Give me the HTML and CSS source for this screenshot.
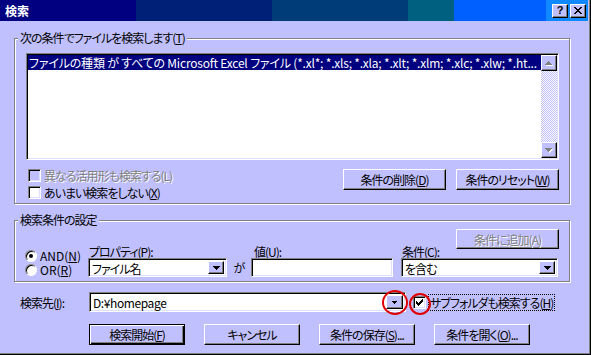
FILE: index.html
```html
<!DOCTYPE html>
<html lang="ja">
<head>
  <meta charset="UTF-8">
  <title>検索</title>
  <link rel="stylesheet" href="styles.css">
</head>
<body>
  <div class="window">
    <div class="titlebar">
      <span class="title">検索</span>
      <div class="caption-buttons">
        <span class="cap-btn">?</span>
        <span class="cap-btn">
          <svg width="8" height="7" viewBox="0 0 8 7" shape-rendering="crispEdges"><path d="M0 0h2v1h1v1h2V1h1V0h2v1H7v1H6v1H5v1h1v1h1v1h1v1H6V6H5V5H3v1H2v1H0V6h1V5h1V4h1V3H2V2H1V1H0z"/></svg>
        </span>
      </div>
    </div>

    <div class="content">
      <fieldset class="group group-criteria">
        <legend>次の条件でファイルを検索します(<u>T</u>)</legend>
        <div class="listbox">
          <div class="list-items">
            <div class="list-item selected">ファイルの種類 が すべての Microsoft Excel ファイル (*.xl*; *.xls; *.xla; *.xlt; *.xlm; *.xlc; *.xlw; *.ht...</div>
          </div>
          <div class="vscroll">
            <span class="sb-btn">
              <svg width="8" height="5" viewBox="0 0 8 5" shape-rendering="crispEdges"><path class="arrow-shadow" d="M4 1h1v1h1v1h1v1h1v1H1V4h1V3h1V2h1z"/><path class="arrow-gray" d="M3 0h1v1h1v1h1v1h1v1H0V3h1V2h1V1h1z"/></svg>
            </span>
            <span class="sb-track"></span>
            <span class="sb-btn">
              <svg width="8" height="5" viewBox="0 0 8 5" shape-rendering="crispEdges"><path class="arrow-shadow" d="M1 1h7v1H7v1H6v1H5v1H4V4H3V3H2V2H1z"/><path class="arrow-gray" d="M0 0h7v1H6v1H5v1H4v1H3V3H2V2H1V1H0z"/></svg>
            </span>
          </div>
        </div>
        <div class="criteria-actions">
          <div class="checks">
            <label class="check disabled"><span class="box"></span><span>異なる活用形も検索する(L)</span></label>
            <label class="check"><span class="box"></span><span>あいまい検索をしない(<u>X</u>)</span></label>
          </div>
          <div class="action-buttons">
            <button class="btn">条件の削除(<u>D</u>)</button>
            <button class="btn">条件のリセット(<u>W</u>)</button>
          </div>
        </div>
      </fieldset>

      <fieldset class="group group-define">
        <legend>検索条件の設定</legend>
        <div class="add-row">
          <button class="btn" disabled>条件に追加(A)</button>
        </div>
        <div class="fields">
          <div class="radios">
            <label class="radio"><span class="dot checked"></span><span>AND(<u>N</u>)</span></label>
            <label class="radio"><span class="dot"></span><span>OR(<u>R</u>)</span></label>
          </div>
          <div class="field field-prop">
            <label>プロパティ(<u>P</u>):</label>
            <div class="combo">
              <span class="value">ファイル名</span>
              <span class="drop"><svg width="7" height="4" viewBox="0 0 7 4" shape-rendering="crispEdges"><path d="M0 0h7v1H6v1H5v1H4v1H3V3H2V2H1V1H0z"/></svg></span>
            </div>
          </div>
          <div class="ga">が</div>
          <div class="field field-value">
            <label>値(<u>U</u>):</label>
            <div class="combo"><span class="value"></span></div>
          </div>
          <div class="field field-cond">
            <label>条件(<u>C</u>):</label>
            <div class="combo">
              <span class="value">を含む</span>
              <span class="drop"><svg width="7" height="4" viewBox="0 0 7 4" shape-rendering="crispEdges"><path d="M0 0h7v1H6v1H5v1H4v1H3V3H2V2H1V1H0z"/></svg></span>
            </div>
          </div>
        </div>
      </fieldset>

      <div class="search-row">
        <label class="search-label">検索先(<u>I</u>):</label>
        <div class="combo path">
          <span class="value">D:¥homepage</span>
          <span class="drop"><svg width="5" height="3" viewBox="0 0 5 3" shape-rendering="crispEdges"><path d="M0 0h5v1H4v1H3v1H2V2H1V1H0z"/></svg></span>
        </div>
        <label class="subfolder">
          <span class="box">
            <svg width="7" height="7" viewBox="0 0 7 7" shape-rendering="crispEdges"><path d="M6 0h1v3H6v1H5v1H4v1H3v1H2V6H1V5H0V2h1v1h1v1h1V3h1V2h1V1h1z"/></svg>
          </span>
          <span class="focus-text">サブフォルダも検索する(<u>H</u>)</span>
        </label>
      </div>

      <div class="main-buttons">
        <button class="btn default">検索開始(<u>F</u>)</button>
        <button class="btn">キャンセル</button>
        <button class="btn">条件の保存(<u>S</u>)...</button>
        <button class="btn">条件を開く(<u>O</u>)...</button>
      </div>
    </div>

    <span class="mark mark-drop"></span>
    <span class="mark mark-check"></span>
  </div>
</body>
</html>
```

FILE: styles.css
```css
* {
  box-sizing: border-box;
}

body {
  margin: 0;
  font-family: "Noto Sans CJK JP", sans-serif;
  font-size: 12px;
  font-feature-settings: "palt";
  letter-spacing: -1px;
  color: #000;
  background-color: #c0c0ff;
}

u {
  text-decoration: underline;
  text-underline-offset: 1px;
}

.window {
  position: relative;
  width: 591px;
  height: 355px;
  background-color: #c0c0ff;
  border-right: 1px solid #000;
  border-bottom: 1px solid #000;
  box-shadow: inset -1px -1px #808080;
  overflow: hidden;
}

/* title bar */
.titlebar {
  display: flex;
  align-items: center;
  justify-content: space-between;
  width: 588px;
  height: 21px;
  padding: 0 2px 0 5px;
  background: linear-gradient(to right,
    #000080 0 136px, #002078 136px 272px, #003c78 272px 408px,
    #006080 408px 454px, #0060ff 454px 546px, #1088ff 546px);
}

.title {
  color: #fff;
  font-weight: bold;
  line-height: 14px;
  letter-spacing: 0;
}

.caption-buttons {
  display: flex;
  gap: 2px;
}

.cap-btn {
  display: flex;
  align-items: center;
  justify-content: center;
  width: 16px;
  height: 14px;
  background-color: #c0c0ff;
  border: 1px solid;
  border-color: #fff #000 #000 #fff;
  box-shadow: inset -1px -1px #808080;
  font-family: "Liberation Sans", sans-serif;
  font-weight: bold;
  font-size: 11px;
  line-height: 1;
  letter-spacing: 0;
}

.content {
  padding-top: 10px;
}

/* group boxes */
.group {
  width: 556px;
  min-width: 0;
  margin: 0 0 0 14px;
  border: 1px solid #808080;
  box-shadow: inset 1px 1px #fff, 1px 1px #fff;
}

.group legend {
  padding: 0 2px;
  line-height: 14px;
  background-color: #c0c0ff;
}

.group-criteria {
  padding: 8px 10px 4px 11px;
}

.group-criteria legend {
  margin-left: -8px;
}

.group-define {
  margin-top: 9px;
  padding: 2px 10px 4px 10px;
}

.group-define legend {
  margin-left: -7px;
}

/* list box */
.listbox {
  display: flex;
  height: 107px;
  padding: 1px;
  background-color: #fff;
  border: 1px solid;
  border-color: #808080 #fff #fff #808080;
  box-shadow: inset 1px 1px #000, inset -1px -1px #dfdfff;
}

.list-items {
  flex: 1;
  min-width: 0;
}

.list-item {
  height: 15px;
  padding-left: 1px;
  line-height: 15px;
  white-space: nowrap;
  overflow: hidden;
  letter-spacing: -0.2px;
}

.list-item.selected {
  background-color: #000080;
  color: #fff;
}

.vscroll {
  display: flex;
  flex-direction: column;
  width: 16px;
}

.sb-btn {
  display: flex;
  align-items: center;
  justify-content: center;
  height: 16px;
  background-color: #c0c0ff;
  border: 1px solid;
  border-color: #fff #000 #000 #fff;
  box-shadow: inset -1px -1px #808080;
}

.arrow-gray {
  fill: #808080;
}

.arrow-shadow {
  fill: #fff;
}

.sb-track {
  flex: 1;
  background: repeating-conic-gradient(#fff 0 25%, #c0c0ff 0 50%) 0 0 / 2px 2px;
}

/* check boxes and buttons */
.criteria-actions {
  display: flex;
  justify-content: space-between;
  margin-top: 9px;
}

.checks {
  display: flex;
  flex-direction: column;
  gap: 4px;
  padding-left: 2px;
}

.check {
  display: flex;
  align-items: center;
  gap: 3px;
  height: 13px;
  line-height: 13px;
}

.box {
  display: flex;
  align-items: center;
  justify-content: center;
  flex: none;
  width: 13px;
  height: 13px;
  background-color: #fff;
  border: 1px solid;
  border-color: #808080 #fff #fff #808080;
  box-shadow: inset 1px 1px #000, inset -1px -1px #dfdfff;
}

.check.disabled {
  color: #808080;
  text-shadow: 1px 1px #fff;
}

.check.disabled .box {
  background-color: #c0c0ff;
}

.action-buttons {
  display: flex;
  gap: 10px;
}

.btn {
  height: 21px;
  padding: 0;
  font: inherit;
  line-height: 17px;
  letter-spacing: inherit;
  white-space: nowrap;
  color: #000;
  background-color: #c0c0ff;
  border: 1px solid;
  border-color: #fff #000 #000 #fff;
  box-shadow: inset -1px -1px #808080;
}

.btn:disabled {
  color: #808080;
  text-shadow: 1px 1px #fff;
}

.action-buttons .btn {
  width: 103px;
}

/* condition definition */
.add-row {
  display: flex;
  justify-content: flex-end;
}

.add-row .btn {
  width: 103px;
  height: 20px;
}

.fields {
  display: flex;
  align-items: flex-end;
  margin-top: -4px;
}

.radios {
  display: flex;
  flex-direction: column;
  width: 63px;
  letter-spacing: 0;
}

.radio {
  display: flex;
  align-items: center;
  gap: 3px;
  height: 14px;
  line-height: 14px;
  white-space: nowrap;
}

.dot {
  display: flex;
  align-items: center;
  justify-content: center;
  flex: none;
  width: 12px;
  height: 12px;
  background-color: #fff;
  border: 1px solid;
  border-color: #808080 #fff #fff #808080;
  border-radius: 50%;
  box-shadow: inset 1px 1px #000;
}

.dot.checked::after {
  content: "";
  width: 4px;
  height: 4px;
  border-radius: 50%;
  background-color: #000;
}

.field {
  display: flex;
  flex-direction: column;
}

.field label {
  height: 13px;
  padding-left: 1px;
  line-height: 13px;
}

.field-prop {
  width: 139px;
}

.field-value {
  width: 142px;
  margin-right: 8px;
}

.field-value label {
  padding-left: 3px;
}

.field-cond {
  width: 157px;
}

.ga {
  width: 24px;
  line-height: 19px;
  text-align: center;
}

.combo {
  display: flex;
  height: 19px;
  padding: 2px;
  background-color: #fff;
  border: 1px solid;
  border-color: #808080 #fff #fff #808080;
  box-shadow: inset 1px 1px #000, inset -1px -1px #dfdfff;
}

.combo .value {
  flex: 1;
  padding-left: 1px;
  line-height: 15px;
  white-space: nowrap;
}

.combo .drop {
  display: flex;
  align-items: center;
  justify-content: center;
  width: 16px;
  background-color: #c0c0ff;
  border: 1px solid;
  border-color: #fff #000 #000 #fff;
  box-shadow: inset -1px -1px #808080;
}

/* search location */
.search-row {
  display: flex;
  align-items: center;
  height: 20px;
  margin-top: 10px;
  padding-left: 20px;
}

.search-label {
  width: 69px;
}

.combo.path {
  width: 317px;
  height: 20px;
}

.combo.path .value {
  line-height: 16px;
  letter-spacing: -0.4px;
}

.combo.path .drop {
  width: 17px;
}

.subfolder {
  display: flex;
  align-items: center;
  margin-left: 7px;
}

.focus-text {
  margin-left: 2px;
  padding: 0 1px;
  line-height: 15px;
  white-space: nowrap;
  border: 1px dotted #000;
}

.main-buttons {
  display: flex;
  gap: 19px;
  margin-top: 12px;
  padding-left: 89px;
}

.main-buttons .btn {
  width: 96px;
}

.btn.default {
  border-color: #000;
  box-shadow: inset 1px 1px #fff, inset -1px -1px #000, inset -2px -2px #808080;
}

/* red annotation circles */
.mark {
  position: absolute;
  border: 2px solid #e00000;
  border-radius: 50%;
}

.mark-drop {
  left: 382px;
  top: 290px;
  width: 26px;
  height: 25px;
}

.mark-check {
  left: 409px;
  top: 293px;
  width: 22px;
  height: 22px;
}
```
